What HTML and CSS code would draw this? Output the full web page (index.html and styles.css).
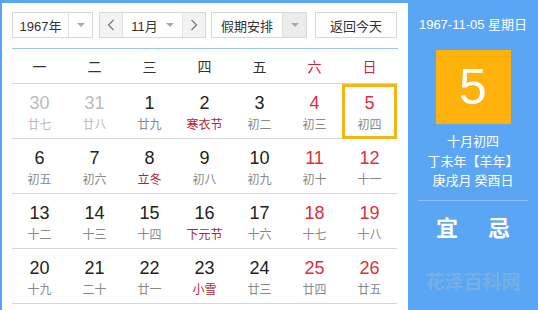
FILE: index.html
```html
<!DOCTYPE html>
<html lang="zh-CN">
<head>
<meta charset="utf-8">
<link rel="stylesheet" href="styles.css">
</head>
<body>
<div class="cal">
  <div class="main">
    <div class="toolbar">
      <div class="sel year"><span class="val">1967年</span><span class="arr"><i class="tri"></i></span></div>
      <div class="month">
        <span class="nav"><svg width="8" height="12" viewBox="0 0 8 12"><path d="M6.5 1 L1.5 6 L6.5 11" fill="none" stroke="#777" stroke-width="1.2"/></svg></span>
        <span class="mval">11月<i class="tri"></i></span>
        <span class="nav"><svg width="8" height="12" viewBox="0 0 8 12"><path d="M1.5 1 L6.5 6 L1.5 11" fill="none" stroke="#777" stroke-width="1.2"/></svg></span>
      </div>
      <div class="sel holiday"><span class="val">假期安排</span><span class="arr grey"><i class="tri"></i></span></div>
      <div class="btn">返回今天</div>
    </div>
    <div class="week">
      <span>一</span><span>二</span><span>三</span><span>四</span><span>五</span><span class="we">六</span><span class="we">日</span>
    </div>
    <div class="grid">
      <div class="cell other"><b>30</b><small>廿七</small></div>
      <div class="cell other"><b>31</b><small>廿八</small></div>
      <div class="cell"><b>1</b><small>廿九</small></div>
      <div class="cell"><b>2</b><small class="fest">寒衣节</small></div>
      <div class="cell"><b>3</b><small>初二</small></div>
      <div class="cell we"><b>4</b><small>初三</small></div>
      <div class="cell we today"><b>5</b><small>初四</small></div>

      <div class="cell"><b>6</b><small>初五</small></div>
      <div class="cell"><b>7</b><small>初六</small></div>
      <div class="cell"><b>8</b><small class="fest">立冬</small></div>
      <div class="cell"><b>9</b><small>初八</small></div>
      <div class="cell"><b>10</b><small>初九</small></div>
      <div class="cell we"><b>11</b><small>初十</small></div>
      <div class="cell we"><b>12</b><small>十一</small></div>

      <div class="cell"><b>13</b><small>十二</small></div>
      <div class="cell"><b>14</b><small>十三</small></div>
      <div class="cell"><b>15</b><small>十四</small></div>
      <div class="cell"><b>16</b><small class="fest">下元节</small></div>
      <div class="cell"><b>17</b><small>十六</small></div>
      <div class="cell we"><b>18</b><small>十七</small></div>
      <div class="cell we"><b>19</b><small>十八</small></div>

      <div class="cell"><b>20</b><small>十九</small></div>
      <div class="cell"><b>21</b><small>二十</small></div>
      <div class="cell"><b>22</b><small>廿一</small></div>
      <div class="cell"><b>23</b><small class="fest">小雪</small></div>
      <div class="cell"><b>24</b><small>廿三</small></div>
      <div class="cell we"><b>25</b><small>廿四</small></div>
      <div class="cell we"><b>26</b><small>廿五</small></div>
    </div>
  </div>
  <div class="side">
    <div class="date">1967-11-05 星期日</div>
    <div class="bigday">5</div>
    <div class="lunar">十月初四</div>
    <div class="lunar">丁未年【羊年】</div>
    <div class="lunar">庚戌月 癸酉日</div>
    <div class="line"></div>
    <div class="yiji"><span>宜</span><span>忌</span></div>
    <div class="mark">花泽百科网</div>
  </div>
</div>
</body>
</html>
```

FILE: styles.css
```css
* { box-sizing: border-box; }
html, body { margin: 0; padding: 0; }
body {
  width: 538px;
  height: 310px;
  overflow: hidden;
  font-family: "Liberation Sans", "Noto Sans CJK SC", sans-serif;
}
.cal {
  display: flex;
  height: 310px;
  background: #5ba6f4;
}
.main {
  width: 406px;
  margin: 3px 0 0 2px;
  background: #fff;
  padding: 8px 10px 0 10px;
}
.toolbar {
  display: flex;
  align-items: center;
  height: 28px;
}
.sel, .month, .btn {
  height: 26px;
  border: 1px solid #d8d8d8;
  background: #fff;
  display: flex;
  align-items: stretch;
  font-size: 13px;
  color: #333;
  font-family: "Noto Sans CJK SC", sans-serif;
}
.sel .val {
  display: flex;
  align-items: center;
  justify-content: center;
  flex: 1;
}
.year { width: 81px; }
.year .val { font-family: "Liberation Sans", "Noto Sans CJK SC", sans-serif; }
.arr {
  width: 24px;
  border-left: 1px solid #e2e2e2;
  display: flex;
  align-items: center;
  justify-content: center;
}
.arr.grey { background: #ececec; }
.tri {
  display: inline-block;
  width: 0; height: 0;
  border-left: 4px solid transparent;
  border-right: 4px solid transparent;
  border-top: 4px solid #aaa;
}
.month {
  margin-left: 6px;
  width: 107px;
}
.nav {
  width: 22px;
  background: #f3f3f3;
  display: flex;
  align-items: center;
  justify-content: center;
}
.mval {
  flex: 1;
  border-left: 1px solid #e2e2e2;
  border-right: 1px solid #e2e2e2;
  display: flex;
  align-items: center;
  justify-content: center;
  gap: 8px;
  font-family: "Liberation Sans", "Noto Sans CJK SC", sans-serif;
}
.holiday {
  margin-left: 5px;
  width: 96px;
}
.btn {
  margin-left: 8px;
  width: 82px;
  align-items: center;
  justify-content: center;
}
.week {
  margin-top: 9px;
  border-top: 1px solid #9cc8f2;
  border-bottom: 1px solid #d6d6d6;
  height: 36px;
  display: grid;
  grid-template-columns: repeat(7, 55px);
  align-items: center;
  font-family: "Noto Sans CJK SC", sans-serif;
  font-size: 14px;
  color: #333;
}
.week span { text-align: center; }
.week .we { color: #c8243a; }
.grid {
  display: grid;
  grid-template-columns: repeat(7, 55px);
  grid-auto-rows: 55px;
}
.cell {
  border-bottom: 1px solid #d6d6d6;
  display: flex;
  flex-direction: column;
  align-items: center;
  padding-top: 9px;
}
.cell b {
  font-weight: normal;
  font-size: 18px;
  line-height: 21px;
  color: #222;
}
.cell small {
  font-family: "Noto Sans CJK SC", sans-serif;
  font-size: 12px;
  line-height: 17px;
  margin-top: 1px;
  color: #888;
}
.cell.other b { color: #bbb; }
.cell.other small { color: #bbb; }
.cell.we b { color: #d9303e; }
.cell small.fest { color: #b01f33; }
.cell.today {
  border: 3px solid #f4b614;
  padding-top: 6px;
}
.side {
  flex: 1;
  display: flex;
  flex-direction: column;
  align-items: center;
  color: #fff;
  font-family: "Noto Sans CJK SC", sans-serif;
}
.date {
  margin-top: 16px;
  font-size: 13px;
  line-height: 18px;
  font-family: "Liberation Sans", "Noto Sans CJK SC", sans-serif;
}
.bigday {
  margin-top: 16px;
  width: 75px;
  height: 74px;
  background: #ffb20c;
  display: flex;
  align-items: center;
  justify-content: center;
  font-family: "Liberation Sans", sans-serif;
  font-size: 50px;
  color: #fff;
}
.lunar {
  font-size: 13px;
  line-height: 19.5px;
}
.bigday + .lunar { margin-top: 7px; }
.line {
  margin-top: 10px;
  width: 110px;
  height: 1px;
  background: #8ec4f8;
}
.yiji {
  margin-top: 11px;
  display: flex;
  gap: 30px;
  font-size: 22px;
  font-weight: bold;
  line-height: 28px;
}
.mark {
  margin-top: 27px;
  font-size: 19px;
  font-weight: bold;
  color: #76afe6;
}
```
